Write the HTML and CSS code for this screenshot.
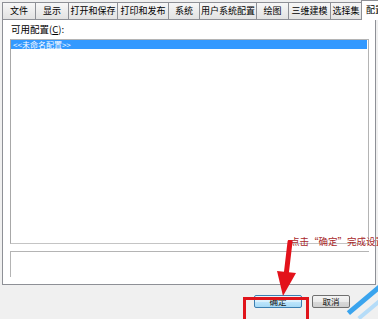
FILE: index.html
```html
<!DOCTYPE html>
<html lang="zh-CN">
<head>
<meta charset="utf-8">
<title>配置</title>
<link rel="stylesheet" href="styles.css">
</head>
<body>
<div class="window">
  <div class="tabs">
    <div class="tab">文件</div>
    <div class="tab">显示</div>
    <div class="tab">打开和保存</div>
    <div class="tab">打印和发布</div>
    <div class="tab">系统</div>
    <div class="tab">用户系统配置</div>
    <div class="tab">绘图</div>
    <div class="tab">三维建模</div>
    <div class="tab">选择集</div>
    <div class="tab active">配置</div>
  </div>
  <div class="panel">
    <div class="label">可用配置(<u>C</u>):</div>
    <div class="listbox">
      <div class="item selected">&lt;&lt;未命名配置&gt;&gt;</div>
    </div>
    <div class="desc"></div>
  </div>
  <div class="buttons">
    <button class="btn default">确定</button>
    <button class="btn">取消</button>
  </div>

  <div class="callout">点击“确定”完成设置</div>
  <svg class="arrow" width="30" height="60" viewBox="275 240 30 60">
    <line x1="290" y1="242" x2="286" y2="276" stroke="#e3121b" stroke-width="5" stroke-linecap="round"/>
    <polygon points="277,271 296,273 283,296" fill="#e3121b"/>
  </svg>
  <div class="highlight"></div>
  <div class="streak"></div>
  <div class="streak light"></div>
</div>
</body>
</html>
```

FILE: styles.css
```css
html, body {
  margin: 0;
  padding: 0;
}
body {
  background: #f0f0f0;
  font-family: "Noto Sans CJK SC", "Noto Sans", sans-serif;
  color: #000;
}
.window {
  position: relative;
  width: 378px;
  height: 319px;
  overflow: hidden;
  background: #f0f0f0;
}
.tabs {
  display: grid;
  grid-template-columns: 33px 33px 49px 51px 31px 57px 32px 42px 31px 40px;
  align-items: end;
  height: 19px;
  padding-left: 3px;
  position: relative;
  z-index: 1;
}
.tab {
  height: 16px;
  margin-left: -1px;
  border: 1px solid #8e9096;
  border-bottom: none;
  background: linear-gradient(#f7f7f7, #e2e2e2);
  font-size: 9px;
  line-height: 16px;
  text-align: center;
  white-space: nowrap;
  overflow: hidden;
}
.tab.active {
  height: 19px;
  margin-bottom: -1px;
  background: #ffffff;
  text-align: left;
  padding-left: 4px;
  line-height: 18px;
}
.panel {
  margin-left: 2px;
  width: 359px;
  height: 254px;
  border: 1px solid #8e9096;
  background: #ffffff;
  padding: 3px 6px 7px 7px;
  display: flex;
  flex-direction: column;
}
.label {
  font-size: 9.5px;
  line-height: 12px;
  height: 12px;
  margin-bottom: 4px;
  padding-left: 1px;
}
.label u {
  text-decoration: underline;
}
.listbox {
  height: 210px;
  border: 1px solid #b4b4b4;
  border-left-color: #a8a8a8;
  border-bottom: 1px solid #c4c4c4;
  background: #ffffff;
}
.item {
  font-size: 8px;
  line-height: 9px;
  height: 9px;
  padding-left: 2px;
  margin-right: 1px;
  white-space: nowrap;
}
.item.selected {
  background: #3399ff;
  color: #ffffff;
}
.desc {
  margin-top: 7px;
  height: 26px;
  border: 1px solid #b4b4b4;
  border-right: none;
  border-bottom: none;
}
.buttons {
  display: flex;
  justify-content: flex-end;
  gap: 10px;
  margin-top: 10px;
  padding-right: 28px;
}
.btn {
  height: 13px;
  padding: 0;
  margin: 0;
  font-family: inherit;
  font-size: 8.5px;
  line-height: 11px;
  color: #111;
  border: 1px solid #707070;
  border-radius: 2px;
  background: linear-gradient(#f4f4f4 0%, #ebebeb 50%, #d9d9d9 51%, #cfcfcf 100%);
  width: 38px;
}
.btn.default {
  width: 48px;
  border-color: #3c7fb1;
  background: linear-gradient(#eaf6fd 0%, #d9f0fc 50%, #bee6fd 51%, #a7d9f5 100%);
}
.callout {
  position: absolute;
  left: 290px;
  top: 235px;
  font-size: 9.5px;
  line-height: 13px;
  color: #a8282a;
  white-space: nowrap;
}
.arrow {
  position: absolute;
  left: 275px;
  top: 240px;
}
.highlight {
  position: absolute;
  left: 243px;
  top: 297px;
  width: 60px;
  height: 34px;
  border: 3px solid #e0141b;
}
.streak {
  position: absolute;
  left: 350px;
  top: 310px;
  width: 44px;
  height: 5px;
  background: #3aa4ee;
  transform: rotate(-40deg);
  transform-origin: 0 100%;
}
.streak.light {
  left: 360px;
  top: 316px;
  height: 4px;
  background: #b5dcf8;
}
```
